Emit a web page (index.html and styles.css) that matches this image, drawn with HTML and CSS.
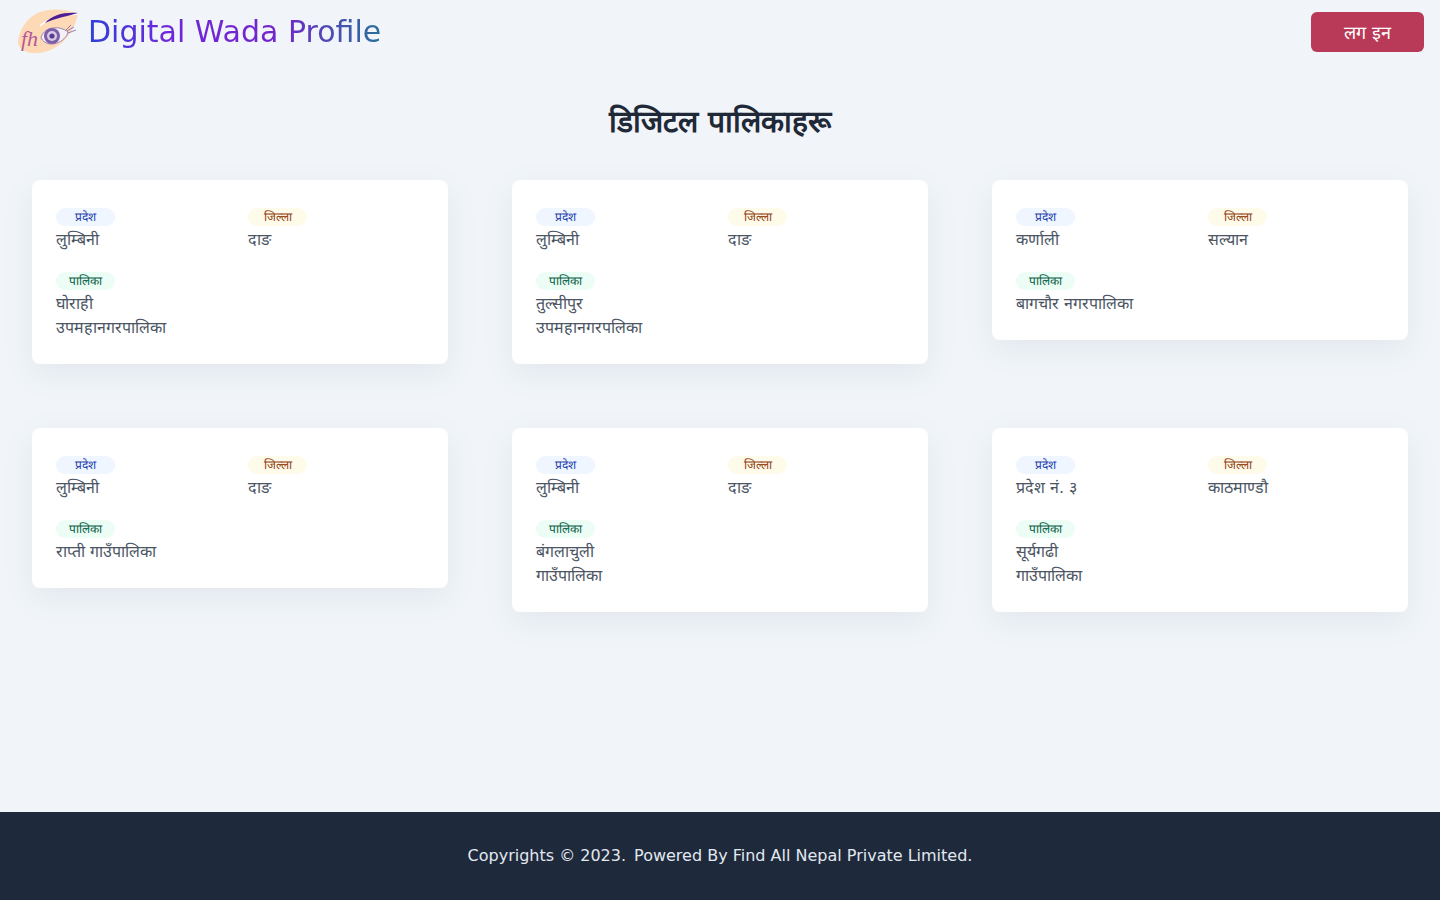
FILE: index.html
```html
<!DOCTYPE html>
<html lang="en">
<head>
  <meta charset="UTF-8">
  <title>Digital Wada Profile</title>
  <link rel="stylesheet" href="styles.css">
</head>
<body>
  <header class="site-header">
    <a class="brand" href="#">
      <svg class="brand-logo" viewBox="0 0 64 64" width="64" height="64" aria-hidden="true">
        <path d="M62 14C50 9 36 8 24 12C12 16 3 30 2 42C2 50 12 54 22 53C38 52 56 40 62 14Z" fill="#fdd9b5"/>
        <path d="M24 26C34 17 48 15 62 14" fill="none" stroke="#fff" stroke-width="1.500"/>
        <path d="M29 23C36 15 48 12 62 13C52 16 40 18 29 23Z" fill="#4c1d95"/>
        <path d="M25 38C27 28 42 24 52 32C50 42 32 50 25 38Z" fill="#f5f0f7" stroke="#8a6fa8" stroke-width="0.800"/>
        <circle cx="36" cy="36" r="8" fill="#7d5ea8"/>
        <circle cx="36" cy="36" r="5" fill="#d9cde6"/>
        <circle cx="36" cy="36" r="2.600" fill="#5b3a96"/>
        <path d="M50 30L55 25M51 31L58 27M52 33L60 30" stroke="#7d5ea8" stroke-width="0.800" fill="none"/>
        <text class="brand-mark" x="5" y="46">fh</text>
      </svg>
      <span class="brand-name">Digital Wada Profile</span>
    </a>
    <button class="login-btn" type="button">लग इन</button>
  </header>

  <main class="content">
    <h1 class="page-title">डिजिटल पालिकाहरू</h1>

    <div class="card-grid">
      <div class="card">
        <div class="field"><span class="tag tag-blue">प्रदेश</span><p>लुम्बिनी</p></div>
        <div class="field"><span class="tag tag-amber">जिल्ला</span><p>दाङ</p></div>
        <div class="field"><span class="tag tag-green">पालिका</span><p>घोराही<br>उपमहानगरपालिका</p></div>
      </div>
      <div class="card">
        <div class="field"><span class="tag tag-blue">प्रदेश</span><p>लुम्बिनी</p></div>
        <div class="field"><span class="tag tag-amber">जिल्ला</span><p>दाङ</p></div>
        <div class="field"><span class="tag tag-green">पालिका</span><p>तुल्सीपुर<br>उपमहानगरपलिका</p></div>
      </div>
      <div class="card">
        <div class="field"><span class="tag tag-blue">प्रदेश</span><p>कर्णाली</p></div>
        <div class="field"><span class="tag tag-amber">जिल्ला</span><p>सल्यान</p></div>
        <div class="field"><span class="tag tag-green">पालिका</span><p>बागचौर नगरपालिका</p></div>
      </div>
      <div class="card">
        <div class="field"><span class="tag tag-blue">प्रदेश</span><p>लुम्बिनी</p></div>
        <div class="field"><span class="tag tag-amber">जिल्ला</span><p>दाङ</p></div>
        <div class="field"><span class="tag tag-green">पालिका</span><p>राप्ती गाउँपालिका</p></div>
      </div>
      <div class="card">
        <div class="field"><span class="tag tag-blue">प्रदेश</span><p>लुम्बिनी</p></div>
        <div class="field"><span class="tag tag-amber">जिल्ला</span><p>दाङ</p></div>
        <div class="field"><span class="tag tag-green">पालिका</span><p>बंगलाचुली<br>गाउँपालिका</p></div>
      </div>
      <div class="card">
        <div class="field"><span class="tag tag-blue">प्रदेश</span><p>प्रदेश नं. ३</p></div>
        <div class="field"><span class="tag tag-amber">जिल्ला</span><p>काठमाण्डौ</p></div>
        <div class="field"><span class="tag tag-green">पालिका</span><p>सूर्यगढी<br>गाउँपालिका</p></div>
      </div>
    </div>
  </main>

  <footer class="site-footer">
    <span>Copyrights © 2023.</span>
    <span>Powered By Find All Nepal Private Limited.</span>
  </footer>
</body>
</html>
```

FILE: styles.css
```css
* {
  box-sizing: border-box;
}
body {
  margin: 0;
  min-height: 100vh;
  display: flex;
  flex-direction: column;
  font-family: "DejaVu Sans", sans-serif;
  font-size: 16px;
  line-height: 24px;
  color: #4b5563;
  background-color: #f1f5f9;
}
.site-header {
  height: 64px;
  padding: 0 16px;
  display: flex;
  align-items: center;
  justify-content: space-between;
}
.brand {
  display: flex;
  align-items: center;
  gap: 8px;
  text-decoration: none;
}
.brand-logo {
  display: block;
}
.brand-mark {
  font-family: "Liberation Serif", serif;
  font-style: italic;
  font-size: 22px;
  fill: #b5589b;
}
.brand-name {
  font-size: 30px;
  line-height: 36px;
  background: linear-gradient(to right, #3040d8, #6d28d9 25%, #7425cc 65%, #27709a);
  -webkit-background-clip: text;
  background-clip: text;
  color: transparent;
}
.login-btn {
  width: 113px;
  height: 40px;
  border: none;
  border-radius: 6px;
  background-color: #b83a58;
  color: #fff;
  font-family: inherit;
  font-size: 18px;
  cursor: pointer;
}
.content {
  flex: 1;
  padding: 0 32px 64px;
}
.page-title {
  margin: 36px 0;
  text-align: center;
  font-size: 30px;
  line-height: 44px;
  font-weight: 600;
  color: #1f2937;
}
.card-grid {
  display: grid;
  grid-template-columns: repeat(3, 1fr);
  gap: 64px;
  align-items: start;
}
.card {
  display: grid;
  grid-template-columns: 176px 176px;
  gap: 16px;
  padding: 24px;
  background: #fff;
  border-radius: 8px;
  box-shadow: 0 10px 30px rgba(100, 116, 139, 0.1);
}
.field p {
  margin: 0;
}
.tag {
  display: block;
  width: 59px;
  height: 18px;
  margin: 4px 0 2px;
  border-radius: 9px;
  font-size: 12px;
  line-height: 18px;
  text-align: center;
}
.tag-blue {
  background: #eff6ff;
  color: #1e40af;
}
.tag-amber {
  background: #fffbeb;
  color: #92400e;
}
.tag-green {
  background: #ecfdf5;
  color: #065f46;
}
.site-footer {
  display: flex;
  justify-content: center;
  gap: 8px;
  padding: 32px;
  background-color: #1e293b;
  color: #e2e8f0;
}
```
